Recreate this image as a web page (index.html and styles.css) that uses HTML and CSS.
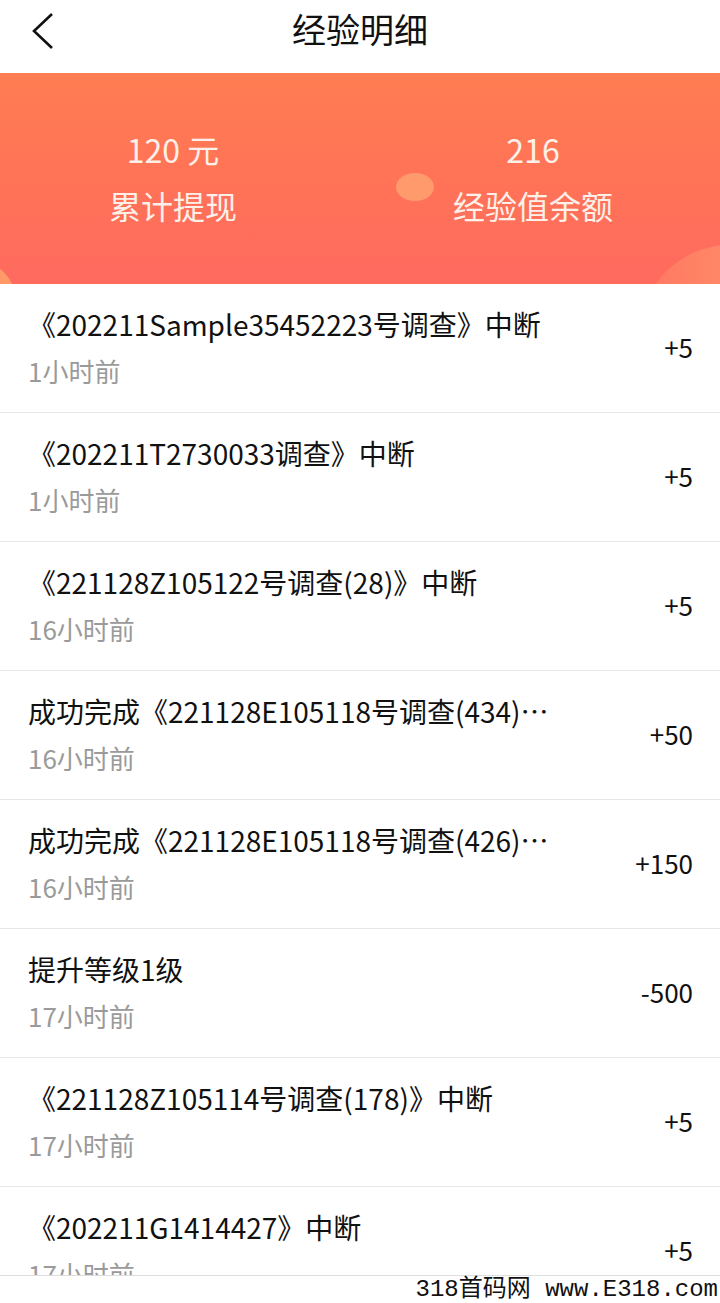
FILE: index.html
```html
<!DOCTYPE html>
<html lang="zh-CN">
<head>
    <meta charset="UTF-8">
    <meta name="viewport" content="width=device-width, initial-scale=1.0">
    <title>经验明细</title>
    <link rel="stylesheet" href="styles.css">
</head>
<body>

    <div class="page">
        <div class="topbar">
            <a class="back" href="#">
                <svg width="24" height="36" viewBox="0 0 24 36"><path d="M21 1 L3 18 L21 35" fill="none" stroke="#111" stroke-width="2.6"/></svg>
            </a>
            <h1>经验明细</h1>
        </div>

        <div class="banner">
            <span class="dot dot-mid"></span>
            <span class="dot dot-left"></span>
            <span class="dot dot-right"></span>
            <div class="stat">
                <p class="num">120 元</p>
                <p class="label">累计提现</p>
            </div>
            <div class="stat">
                <p class="num">216</p>
                <p class="label">经验值余额</p>
            </div>
        </div>

        <ul class="records">
            <li class="record">
                <div class="info">
                    <p class="title">《202211Sample35452223号调查》中断</p>
                    <p class="time">1小时前</p>
                </div>
                <span class="value">+5</span>
            </li>
            <li class="record">
                <div class="info">
                    <p class="title">《202211T2730033调查》中断</p>
                    <p class="time">1小时前</p>
                </div>
                <span class="value">+5</span>
            </li>
            <li class="record">
                <div class="info">
                    <p class="title">《221128Z105122号调查(28)》中断</p>
                    <p class="time">16小时前</p>
                </div>
                <span class="value">+5</span>
            </li>
            <li class="record">
                <div class="info">
                    <p class="title">成功完成《221128E105118号调查(434)》获得经验</p>
                    <p class="time">16小时前</p>
                </div>
                <span class="value">+50</span>
            </li>
            <li class="record">
                <div class="info">
                    <p class="title">成功完成《221128E105118号调查(426)》获得经验</p>
                    <p class="time">16小时前</p>
                </div>
                <span class="value">+150</span>
            </li>
            <li class="record">
                <div class="info">
                    <p class="title">提升等级1级</p>
                    <p class="time">17小时前</p>
                </div>
                <span class="value">-500</span>
            </li>
            <li class="record">
                <div class="info">
                    <p class="title">《221128Z105114号调查(178)》中断</p>
                    <p class="time">17小时前</p>
                </div>
                <span class="value">+5</span>
            </li>
            <li class="record">
                <div class="info">
                    <p class="title">《202211G1414427》中断</p>
                    <p class="time">17小时前</p>
                </div>
                <span class="value">+5</span>
            </li>
        </ul>
    </div>

    <div class="watermark">318首码网 www.E318.com</div>

</body>
</html>
```

FILE: styles.css
```css
* {
    box-sizing: border-box;
}

body {
    margin: 0;
    font-family: "Noto Sans CJK SC", "Noto Sans", sans-serif;
    background-color: #fff;
    color: #111;
}

p {
    margin: 0;
}

.page {
    height: 1276px;
    overflow: hidden;
    border-bottom: 1px solid #ddd;
}

.topbar {
    height: 73px;
    display: flex;
    align-items: center;
    justify-content: center;
    position: relative;
    background-color: #fff;
}

.topbar h1 {
    margin: 0 0 16px;
    font-size: 34px;
    font-weight: 400;
    color: #111;
}

.back {
    position: absolute;
    left: 31px;
    top: 13px;
}

.banner {
    height: 211px;
    display: flex;
    align-items: center;
    padding: 0 0 4px 0;
    position: relative;
    overflow: hidden;
    background: linear-gradient(180deg, #ff7d52 0%, #ff7357 50%, #ff6a5f 100%);
}

.dot {
    position: absolute;
    border-radius: 50%;
}

.dot-mid {
    width: 38px;
    height: 28px;
    left: 396px;
    top: 100px;
    background-color: #ff9a6d;
}

.dot-left {
    width: 80px;
    height: 80px;
    left: -64px;
    top: 188px;
    background-color: #ff9a68;
}

.dot-right {
    width: 180px;
    height: 180px;
    left: 640px;
    top: 172px;
    background: linear-gradient(90deg, #ff7762 0%, #ff9a6c 100%);
}

.stat {
    flex: 1;
    padding-right: 14px;
    text-align: center;
    color: #fdf0e8;
    position: relative;
}

.stat .num {
    font-size: 32px;
    line-height: 44px;
}

.stat .label {
    font-size: 32px;
    line-height: 44px;
    margin-top: 12px;
}

.records {
    list-style: none;
    margin: 0;
    padding: 0;
}

.record {
    height: 129px;
    display: flex;
    align-items: center;
    padding: 0 27px 0 28px;
    border-bottom: 1px solid #e6e6e6;
}

.info {
    flex: 1;
    min-width: 0;
    padding-bottom: 4px;
}

.title {
    max-width: 522px;
    font-size: 28px;
    line-height: 40px;
    white-space: nowrap;
    overflow: hidden;
    text-overflow: ellipsis;
}

.time {
    margin-top: 9px;
    font-size: 26px;
    line-height: 36px;
    color: #9a9a9a;
}

.value {
    font-size: 26px;
    padding-bottom: 4px;
    color: #111;
}

.watermark {
    height: 27px;
    text-align: right;
    padding-right: 2px;
    font-family: "Liberation Mono", "Noto Sans CJK SC", monospace;
    font-size: 24px;
    line-height: 27px;
    color: #111;
}
```
